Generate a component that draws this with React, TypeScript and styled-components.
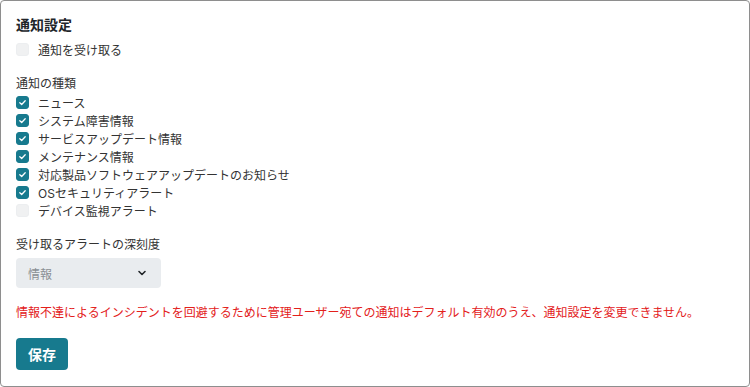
import styled, { createGlobalStyle } from "styled-components";

const GlobalStyle = createGlobalStyle`
  html, body {
    margin: 0;
    padding: 0;
    background: #fff;
  }
  body {
    font-family: Inter, "Noto Sans CJK JP", sans-serif;
    color: #212529;
  }
`;

const Panel = styled.div`
  box-sizing: border-box;
  width: 750px;
  height: 387px;
  border: 1px solid #8e8e8e;
  border-radius: 4px;
  padding: 13px 15px;
  display: flex;
  flex-direction: column;
  align-items: flex-start;

  & > * {
    flex-shrink: 0;
  }
`;

const Title = styled.h2`
  margin: 0 0 4px;
  font-size: 14px;
  font-weight: 700;
  line-height: 22px;
  color: #212529;
`;

const Row = styled.label`
  display: flex;
  align-items: center;
  gap: 9px;
  height: 18px;
  font-size: 12px;
  color: #333;
`;

const Box = styled.span<{ $checked: boolean }>`
  width: 13px;
  height: 13px;
  border-radius: 3px;
  flex-shrink: 0;
  display: flex;
  align-items: center;
  justify-content: center;
  background: ${(p) => (p.$checked ? "#177a8e" : "#f0f1f2")};
  border: 1px solid ${(p) => (p.$checked ? "#177a8e" : "#eceef0")};
  box-sizing: border-box;
`;

const SectionLabel = styled.div<{ $top: number }>`
  margin-top: ${(p) => p.$top}px;
  font-size: 12px;
  line-height: 18px;
  color: #333;
`;

const SelectBox = styled.div`
  margin-top: 4px;
  width: 145px;
  height: 30px;
  box-sizing: border-box;
  background: #e9ecef;
  border-radius: 4px;
  display: flex;
  align-items: center;
  justify-content: space-between;
  padding: 0 14px 0 12px;
  font-size: 12px;
  color: #8a8f94;
`;

const Warning = styled.p`
  margin: 16px 0 0;
  font-size: 12px;
  line-height: 18px;
  color: #e3201b;
`;

const SaveButton = styled.button`
  margin-top: 16px;
  width: 52px;
  height: 32px;
  border: none;
  border-radius: 4px;
  background: #177a8e;
  color: #fff;
  font-family: inherit;
  font-size: 14px;
  font-weight: 700;
  cursor: pointer;
`;

const Check = () => (
  <svg width="9" height="9" viewBox="0 0 10 10">
    <path
      d="M2 5.2 L4.1 7.2 L8 3"
      fill="none"
      stroke="#fff"
      strokeWidth="1.4"
      strokeLinecap="round"
      strokeLinejoin="round"
    />
  </svg>
);

const Chevron = () => (
  <svg width="10" height="10" viewBox="0 0 10 10">
    <path
      d="M2 3.5 L5 6.5 L8 3.5"
      fill="none"
      stroke="#212529"
      strokeWidth="1.6"
      strokeLinecap="round"
      strokeLinejoin="round"
    />
  </svg>
);

const CheckRow = ({ label, checked }: { label: string; checked: boolean }) => (
  <Row>
    <Box $checked={checked}>{checked && <Check />}</Box>
    {label}
  </Row>
);

const kinds: { label: string; checked: boolean }[] = [
  { label: "ニュース", checked: true },
  { label: "システム障害情報", checked: true },
  { label: "サービスアップデート情報", checked: true },
  { label: "メンテナンス情報", checked: true },
  { label: "対応製品ソフトウェアアップデートのお知らせ", checked: true },
  { label: "OSセキュリティアラート", checked: true },
  { label: "デバイス監視アラート", checked: false },
];

export default function App() {
  return (
    <>
      <GlobalStyle />
      <Panel>
        <Title>通知設定</Title>
        <CheckRow label="通知を受け取る" checked={false} />
        <SectionLabel $top={17}>通知の種類</SectionLabel>
        {kinds.map((k) => (
          <CheckRow key={k.label} label={k.label} checked={k.checked} />
        ))}
        <SectionLabel $top={17}>受け取るアラートの深刻度</SectionLabel>
        <SelectBox>
          情報
          <Chevron />
        </SelectBox>
        <Warning>
          情報不達によるインシデントを回避するために管理ユーザー宛ての通知はデフォルト有効のうえ、通知設定を変更できません。
        </Warning>
        <SaveButton>保存</SaveButton>
      </Panel>
    </>
  );
}
